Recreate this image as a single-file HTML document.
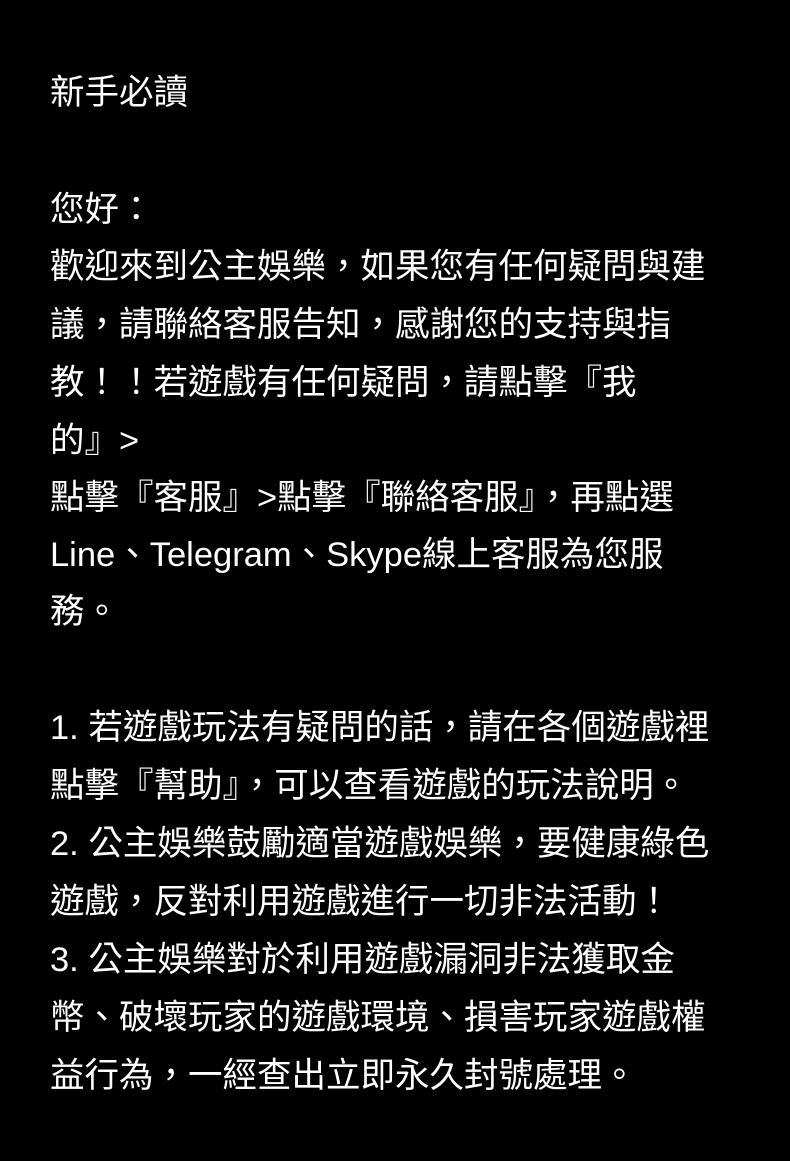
<!DOCTYPE html>
<html lang="zh-Hant"><head><meta charset="utf-8">
<style>
html,body{margin:0;padding:0;background:#000;}
body{width:790px;height:1161px;position:relative;overflow:hidden;
font-family:"Liberation Sans","Noto Sans CJK TC",sans-serif;color:#fff;font-size:34.5px;}
.l{position:absolute;left:50px;height:58px;line-height:58px;white-space:nowrap;}
</style></head><body>
<div class="l" style="top:64px">新手必讀</div>
<div class="l" style="top:181px">您好：</div>
<div class="l" style="top:238px">歡迎來到公主娛樂，如果您有任何疑問與建</div>
<div class="l" style="top:296px">議，請聯絡客服告知，感謝您的支持與指</div>
<div class="l" style="top:354px">教！！若遊戲有任何疑問，請點擊『我</div>
<div class="l" style="top:412px">的』&gt;</div>
<div class="l" style="top:469px">點擊『客服』&gt;點擊『聯絡客服』，再點選</div>
<div class="l" style="top:526px">Line、Telegram、Skype線上客服為您服</div>
<div class="l" style="top:583px">務。</div>
<div class="l" style="top:699px">1. 若遊戲玩法有疑問的話，請在各個遊戲裡</div>
<div class="l" style="top:757px">點擊『幫助』，可以查看遊戲的玩法說明。</div>
<div class="l" style="top:815px">2. 公主娛樂鼓勵適當遊戲娛樂，要健康綠色</div>
<div class="l" style="top:873px">遊戲，反對利用遊戲進行一切非法活動！</div>
<div class="l" style="top:931px">3. 公主娛樂對於利用遊戲漏洞非法獲取金</div>
<div class="l" style="top:989px">幣、破壞玩家的遊戲環境、損害玩家遊戲權</div>
<div class="l" style="top:1047px">益行為，一經查出立即永久封號處理。</div>
</body></html>
